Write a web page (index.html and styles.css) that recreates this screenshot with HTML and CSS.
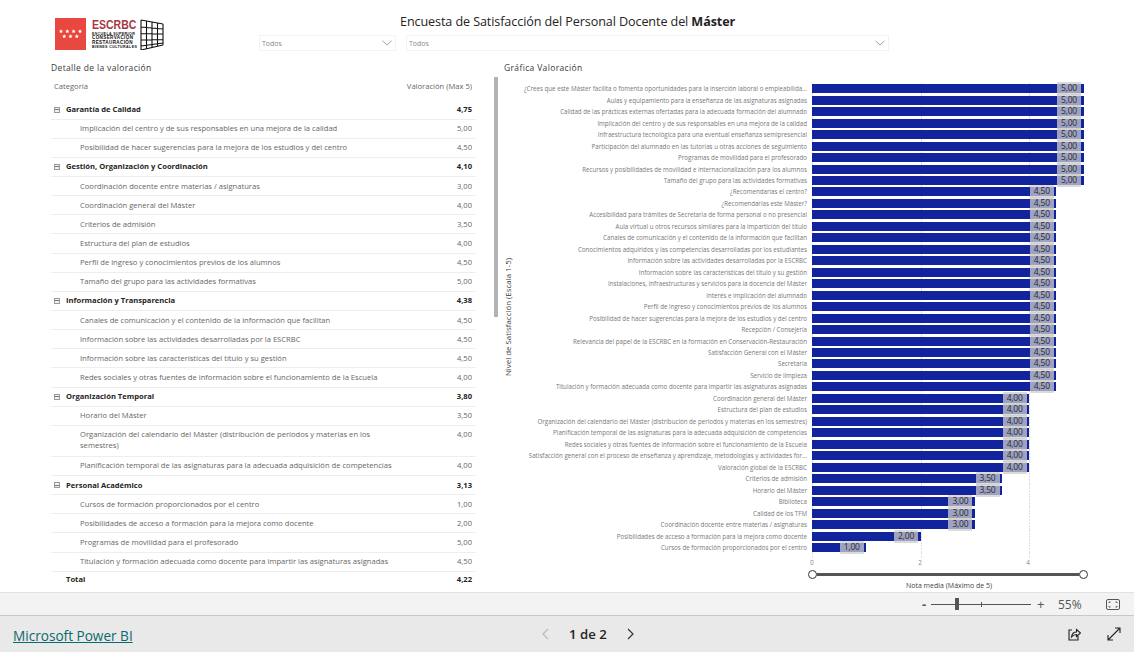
FILE: index.html
```html
<!DOCTYPE html>
<html lang="es">
<head>
<meta charset="utf-8">
<title>Encuesta de Satisfacción</title>
<link rel="stylesheet" href="styles.css">
</head>
<body>
<main class="report">
  <header class="head">
    <div class="logo">
      <svg class="flag" viewBox="0 0 31 32" width="31" height="32"><rect width="31" height="32" fill="#e8483f"/>
        <g fill="#fff"><path d="M6 11.200l.6 1.300 1.400.2-1 1 .25 1.400L6 14.400l-1.250.7.25-1.400-1-1 1.400-.2z"/><path d="M12.300 11.200l.6 1.300 1.400.2-1 1 .25 1.400-1.250-.7-1.250.7.25-1.400-1-1 1.400-.2z"/><path d="M18.600 11.200l.6 1.300 1.400.2-1 1 .25 1.400-1.250-.7-1.250.7.25-1.400-1-1 1.400-.2z"/><path d="M25 11.200l.6 1.300 1.400.2-1 1 .25 1.400-1.250-.7-1.250.7.25-1.400-1-1 1.400-.2z"/><path d="M9.200 16.200l.6 1.300 1.400.2-1 1 .25 1.400-1.250-.7-1.250.7.25-1.400-1-1 1.400-.2z"/><path d="M15.500 16.200l.6 1.300 1.400.2-1 1 .25 1.400-1.250-.7-1.250.7.25-1.400-1-1 1.400-.2z"/><path d="M21.800 16.200l.6 1.300 1.400.2-1 1 .25 1.400-1.250-.7-1.250.7.25-1.400-1-1 1.400-.2z"/></g></svg>
      <div class="logo-text">
        <span class="logo-name">ESCRBC</span>
        <span class="logo-line thin">ESCUELA SUPERIOR</span>
        <span class="logo-line">CONSERVACIÓN</span>
        <span class="logo-line">RESTAURACIÓN</span>
        <span class="logo-line thin">BIENES CULTURALES</span>
      </div>
      <svg class="grid-mark" viewBox="0 0 24 31" width="24" height="31" fill="none" stroke="#111" stroke-width="1.1"><path d="M1 1V31M6.500 2V29.500M12 3V28M17.500 4V27M23 5V26M1 1L23 5M1 8L23 10M1 14.500L23 15M1 21L23 20.500M1 27L23 24M1 31L23 26"/></svg>
    </div>
    <div class="head-main">
      <h1 class="title">Encuesta de Satisfacción del Personal Docente del <b>Máster</b></h1>
      <div class="filters">
        <div class="select select-a"><span>Todos</span><svg class="chev" viewBox="0 0 10 6" width="10" height="6" fill="none" stroke="#999" stroke-width=".9"><path d="M.500 .800L5 5L9.500 .800"/></svg></div>
        <div class="select select-b"><span>Todos</span><svg class="chev" viewBox="0 0 10 6" width="10" height="6" fill="none" stroke="#999" stroke-width=".9"><path d="M.500 .800L5 5L9.500 .800"/></svg></div>
      </div>
    </div>
  </header>

  <div class="panels">
    <section class="table-panel">
      <h2 class="panel-title">Detalle de la valoración</h2>
      <div class="table-wrap">
        <div class="table">
          <div class="thead"><span>Categoría</span><span>Valoración (Max 5)</span></div>
          <div class="row group"><span class="cell"><i class="minus"></i>Garantía de Calidad</span><span>4,75</span></div>
          <div class="row"><span class="cell">Implicación del centro y de sus responsables en una mejora de la calidad</span><span>5,00</span></div>
          <div class="row"><span class="cell">Posibilidad de hacer sugerencias para la mejora de los estudios y del centro</span><span>4,50</span></div>
          <div class="row group"><span class="cell"><i class="minus"></i>Gestión, Organización y Coordinación</span><span>4,10</span></div>
          <div class="row"><span class="cell">Coordinación docente entre materias / asignaturas</span><span>3,00</span></div>
          <div class="row"><span class="cell">Coordinación general del Máster</span><span>4,00</span></div>
          <div class="row"><span class="cell">Criterios de admisión</span><span>3,50</span></div>
          <div class="row"><span class="cell">Estructura del plan de estudios</span><span>4,00</span></div>
          <div class="row"><span class="cell">Perfil de ingreso y conocimientos previos de los alumnos</span><span>4,50</span></div>
          <div class="row"><span class="cell">Tamaño del grupo para las actividades formativas</span><span>5,00</span></div>
          <div class="row group"><span class="cell"><i class="minus"></i>Información y Transparencia</span><span>4,38</span></div>
          <div class="row"><span class="cell">Canales de comunicación y el contenido de la información que facilitan</span><span>4,50</span></div>
          <div class="row"><span class="cell">Información sobre las actividades desarrolladas por la ESCRBC</span><span>4,50</span></div>
          <div class="row"><span class="cell">Información sobre las características del título y su gestión</span><span>4,50</span></div>
          <div class="row"><span class="cell">Redes sociales y otras fuentes de información sobre el funcionamiento de la Escuela</span><span>4,00</span></div>
          <div class="row group"><span class="cell"><i class="minus"></i>Organización Temporal</span><span>3,80</span></div>
          <div class="row"><span class="cell">Horario del Máster</span><span>3,50</span></div>
          <div class="row tall"><span class="cell">Organización del calendario del Máster (distribución de periodos y materias en los semestres)</span><span>4,00</span></div>
          <div class="row"><span class="cell">Planificación temporal de las asignaturas para la adecuada adquisición de competencias</span><span>4,00</span></div>
          <div class="row group"><span class="cell"><i class="minus"></i>Personal Académico</span><span>3,13</span></div>
          <div class="row"><span class="cell">Cursos de formación proporcionados por el centro</span><span>1,00</span></div>
          <div class="row"><span class="cell">Posibilidades de acceso a formación para la mejora como docente</span><span>2,00</span></div>
          <div class="row"><span class="cell">Programas de movilidad para el profesorado</span><span>5,00</span></div>
          <div class="row"><span class="cell">Titulación y formación adecuada como docente para impartir las asignaturas asignadas</span><span>4,50</span></div>
          <div class="row total"><span class="cell">Total</span><span>4,22</span></div>
        </div>
        <div class="scrollbar"></div>
      </div>
    </section>

    <section class="chart-panel">
      <h2 class="panel-title">Gráfica Valoración</h2>
      <div class="chart">
        <div class="y-title"><span>Nivel de Satisfacción (Escala 1-5)</span></div>
        <div class="chart-main">
          <div class="bars">
            <div class="bar-row"><span class="bar-label">¿Crees que este Máster facilita o fomenta oportunidades para la inserción laboral o empleabilida...</span><div class="plot"><div class="bar" style="width:100%"><span class="val">5,00</span></div></div></div>
            <div class="bar-row"><span class="bar-label">Aulas y equipamiento para la enseñanza de las asignaturas asignadas</span><div class="plot"><div class="bar" style="width:100%"><span class="val">5,00</span></div></div></div>
            <div class="bar-row"><span class="bar-label">Calidad de las prácticas externas ofertadas para la adecuada formación del alumnado</span><div class="plot"><div class="bar" style="width:100%"><span class="val">5,00</span></div></div></div>
            <div class="bar-row"><span class="bar-label">Implicación del centro y de sus responsables en una mejora de la calidad</span><div class="plot"><div class="bar" style="width:100%"><span class="val">5,00</span></div></div></div>
            <div class="bar-row"><span class="bar-label">Infraestructura tecnológica para una eventual enseñanza semipresencial</span><div class="plot"><div class="bar" style="width:100%"><span class="val">5,00</span></div></div></div>
            <div class="bar-row"><span class="bar-label">Participación del alumnado en las tutorías u otras acciones de seguimiento</span><div class="plot"><div class="bar" style="width:100%"><span class="val">5,00</span></div></div></div>
            <div class="bar-row"><span class="bar-label">Programas de movilidad para el profesorado</span><div class="plot"><div class="bar" style="width:100%"><span class="val">5,00</span></div></div></div>
            <div class="bar-row"><span class="bar-label">Recursos y posibilidades de movilidad e internacionalización para los alumnos</span><div class="plot"><div class="bar" style="width:100%"><span class="val">5,00</span></div></div></div>
            <div class="bar-row"><span class="bar-label">Tamaño del grupo para las actividades formativas</span><div class="plot"><div class="bar" style="width:100%"><span class="val">5,00</span></div></div></div>
            <div class="bar-row"><span class="bar-label">¿Recomendarías el centro?</span><div class="plot"><div class="bar" style="width:90%"><span class="val">4,50</span></div></div></div>
            <div class="bar-row"><span class="bar-label">¿Recomendarías este Máster?</span><div class="plot"><div class="bar" style="width:90%"><span class="val">4,50</span></div></div></div>
            <div class="bar-row"><span class="bar-label">Accesibilidad para trámites de Secretaría de forma personal o no presencial</span><div class="plot"><div class="bar" style="width:90%"><span class="val">4,50</span></div></div></div>
            <div class="bar-row"><span class="bar-label">Aula virtual u otros recursos similares para la impartición del título</span><div class="plot"><div class="bar" style="width:90%"><span class="val">4,50</span></div></div></div>
            <div class="bar-row"><span class="bar-label">Canales de comunicación y el contenido de la información que facilitan</span><div class="plot"><div class="bar" style="width:90%"><span class="val">4,50</span></div></div></div>
            <div class="bar-row"><span class="bar-label">Conocimientos adquiridos y las competencias desarrolladas por los estudiantes</span><div class="plot"><div class="bar" style="width:90%"><span class="val">4,50</span></div></div></div>
            <div class="bar-row"><span class="bar-label">Información sobre las actividades desarrolladas por la ESCRBC</span><div class="plot"><div class="bar" style="width:90%"><span class="val">4,50</span></div></div></div>
            <div class="bar-row"><span class="bar-label">Información sobre las características del título y su gestión</span><div class="plot"><div class="bar" style="width:90%"><span class="val">4,50</span></div></div></div>
            <div class="bar-row"><span class="bar-label">Instalaciones, infraestructuras y servicios para la docencia del Máster</span><div class="plot"><div class="bar" style="width:90%"><span class="val">4,50</span></div></div></div>
            <div class="bar-row"><span class="bar-label">Interés e implicación del alumnado</span><div class="plot"><div class="bar" style="width:90%"><span class="val">4,50</span></div></div></div>
            <div class="bar-row"><span class="bar-label">Perfil de ingreso y conocimientos previos de los alumnos</span><div class="plot"><div class="bar" style="width:90%"><span class="val">4,50</span></div></div></div>
            <div class="bar-row"><span class="bar-label">Posibilidad de hacer sugerencias para la mejora de los estudios y del centro</span><div class="plot"><div class="bar" style="width:90%"><span class="val">4,50</span></div></div></div>
            <div class="bar-row"><span class="bar-label">Recepción / Consejería</span><div class="plot"><div class="bar" style="width:90%"><span class="val">4,50</span></div></div></div>
            <div class="bar-row"><span class="bar-label">Relevancia del papel de la ESCRBC en la formación en Conservación-Restauración</span><div class="plot"><div class="bar" style="width:90%"><span class="val">4,50</span></div></div></div>
            <div class="bar-row"><span class="bar-label">Satisfacción General con el Máster</span><div class="plot"><div class="bar" style="width:90%"><span class="val">4,50</span></div></div></div>
            <div class="bar-row"><span class="bar-label">Secretaría</span><div class="plot"><div class="bar" style="width:90%"><span class="val">4,50</span></div></div></div>
            <div class="bar-row"><span class="bar-label">Servicio de limpieza</span><div class="plot"><div class="bar" style="width:90%"><span class="val">4,50</span></div></div></div>
            <div class="bar-row"><span class="bar-label">Titulación y formación adecuada como docente para impartir las asignaturas asignadas</span><div class="plot"><div class="bar" style="width:90%"><span class="val">4,50</span></div></div></div>
            <div class="bar-row"><span class="bar-label">Coordinación general del Máster</span><div class="plot"><div class="bar" style="width:80%"><span class="val">4,00</span></div></div></div>
            <div class="bar-row"><span class="bar-label">Estructura del plan de estudios</span><div class="plot"><div class="bar" style="width:80%"><span class="val">4,00</span></div></div></div>
            <div class="bar-row"><span class="bar-label">Organización del calendario del Máster (distribución de periodos y materias en los semestres)</span><div class="plot"><div class="bar" style="width:80%"><span class="val">4,00</span></div></div></div>
            <div class="bar-row"><span class="bar-label">Planificación temporal de las asignaturas para la adecuada adquisición de competencias</span><div class="plot"><div class="bar" style="width:80%"><span class="val">4,00</span></div></div></div>
            <div class="bar-row"><span class="bar-label">Redes sociales y otras fuentes de información sobre el funcionamiento de la Escuela</span><div class="plot"><div class="bar" style="width:80%"><span class="val">4,00</span></div></div></div>
            <div class="bar-row"><span class="bar-label">Satisfacción general con el proceso de enseñanza y aprendizaje, metodologías y actividades for...</span><div class="plot"><div class="bar" style="width:80%"><span class="val">4,00</span></div></div></div>
            <div class="bar-row"><span class="bar-label">Valoración global de la ESCRBC</span><div class="plot"><div class="bar" style="width:80%"><span class="val">4,00</span></div></div></div>
            <div class="bar-row"><span class="bar-label">Criterios de admisión</span><div class="plot"><div class="bar" style="width:70%"><span class="val">3,50</span></div></div></div>
            <div class="bar-row"><span class="bar-label">Horario del Máster</span><div class="plot"><div class="bar" style="width:70%"><span class="val">3,50</span></div></div></div>
            <div class="bar-row"><span class="bar-label">Biblioteca</span><div class="plot"><div class="bar" style="width:60%"><span class="val">3,00</span></div></div></div>
            <div class="bar-row"><span class="bar-label">Calidad de los TFM</span><div class="plot"><div class="bar" style="width:60%"><span class="val">3,00</span></div></div></div>
            <div class="bar-row"><span class="bar-label">Coordinación docente entre materias / asignaturas</span><div class="plot"><div class="bar" style="width:60%"><span class="val">3,00</span></div></div></div>
            <div class="bar-row"><span class="bar-label">Posibilidades de acceso a formación para la mejora como docente</span><div class="plot"><div class="bar" style="width:40%"><span class="val">2,00</span></div></div></div>
            <div class="bar-row"><span class="bar-label">Cursos de formación proporcionados por el centro</span><div class="plot"><div class="bar" style="width:20%"><span class="val">1,00</span></div></div></div>
            <div class="bar-row end"><span class="bar-label"></span><div class="plot"></div></div>
          </div>
          <div class="x-axis"><span>0</span><span>2</span><span>4</span></div>
          <div class="slider"><i class="knob"></i><b class="track"></b><i class="knob"></i></div>
          <div class="x-title">Nota media (Máximo de 5)</div>
        </div>
      </div>
    </section>
  </div>
</main>

<div class="zoom-bar">
  <span class="z-minus">-</span>
  <div class="z-track"><i class="z-thumb"></i><i class="z-tick"></i></div>
  <span class="z-plus">+</span>
  <span class="z-pct">55%</span>
  <svg class="z-fit" viewBox="0 0 14 11" width="14" height="11" fill="none" stroke="#555"><rect x=".5" y=".5" width="13" height="10" rx="1.500"/><path d="M3 4V3H4.500M9.500 3H11V4M11 7V8H9.500M4.500 8H3V7"/></svg>
</div>

<footer class="foot">
  <a class="brand" href="#">Microsoft Power BI</a>
  <nav class="pager">
    <svg viewBox="0 0 7 12" width="7" height="12" fill="none" stroke="#bbb" stroke-width="1.2"><path d="M6 1L1 6L6 11"/></svg>
    <span class="page">1 de 2</span>
    <svg viewBox="0 0 7 12" width="7" height="12" fill="none" stroke="#333" stroke-width="1.2"><path d="M1 1L6 6L1 11"/></svg>
  </nav>
  <div class="foot-icons">
    <svg viewBox="0 0 14 14" width="14" height="14" fill="none" stroke="#222" stroke-width="1.100"><path d="M5 3H2V13H11V9"/><path d="M4.500 10C5 6.500 7 5 9.500 5V2.500L13.500 6L9.500 9.500V7.500C7.500 7.500 6 8.300 4.500 10Z"/></svg>
    <svg viewBox="0 0 14 14" width="14" height="14" fill="none" stroke="#222" stroke-width="1.100"><path d="M1 13L13 1M8 1H13V6M1 8V13H6"/></svg>
  </div>
</footer>
</body>
</html>
```

FILE: styles.css
```css
* { box-sizing: border-box; }
html, body { margin: 0; height: 100%; }
body {
  width: 1134px; height: 652px; overflow: hidden; background: #fff;
  font-family: "Open Sans", "Liberation Sans", sans-serif;
  display: flex; flex-direction: column;
}
.report { height: 592px; display: flex; flex-direction: column; }

.head { height: 60px; display: flex; }
.logo { width: 259px; padding: 18px 0 0 55px; display: flex; align-items: flex-start; }
.flag { flex: none; margin-right: 6px; }
.logo-text { width: 47px; display: flex; flex-direction: column; align-items: flex-start; margin-right: 1px; }
.logo-name { font: bold 12.500px/14px "Liberation Sans", sans-serif; color: #a5383f; transform: scaleX(.84); transform-origin: left; white-space: nowrap; }
.logo-line { font: bold 4.600px/4.400px "Liberation Sans", sans-serif; color: #111; letter-spacing: .35px; white-space: nowrap; }
.logo-line.thin { font-size: 3.600px; letter-spacing: .4px; }
.grid-mark { flex: none; margin-top: 1px; }

.head-main { flex: none; width: 630px; }
.title { margin: 13px 0 0 141px; font-size: 12.600px; line-height: 17px; font-weight: 400; letter-spacing: -.1px; color: #252423; white-space: nowrap; }
.title b { font-weight: 700; }
.filters { display: flex; gap: 10px; margin-top: 5px; }
.select { height: 16px; border: 1px solid #f3f3f3; display: flex; align-items: center; justify-content: space-between; padding: 0 3px 0 2px; font-size: 7px; color: #8a8a8a; }
.select-a { width: 137px; }
.select-b { width: 483px; }

.panels { display: flex; flex: 1; }
.panel-title { margin: 0; font-size: 8.500px; line-height: 12px; font-weight: 400; letter-spacing: .35px; color: #3b3a39; }

.table-panel { width: 453px; margin-left: 51px; display: flex; flex-direction: column; padding-top: 2px; }
.table-wrap { display: flex; align-items: flex-start; gap: 18px; }
.table { width: 425px; font-size: 7.600px; }
.thead { height: 26.500px; padding: 6px 4px 0 3px; display: flex; justify-content: space-between; color: #666; line-height: 12px; }
.row { min-height: 19.150px; display: flex; justify-content: space-between; align-items: center; padding: 0 4px 0 29px; color: #666; border-bottom: 1px solid #eee; line-height: 11px; }
.row.tall { min-height: 31px; align-items: flex-start; padding-top: 3px; padding-bottom: 3px; }
.row.tall .cell { width: 310px; }
.row.group { padding-left: 3px; color: #252423; font-weight: 700; }
.row.group .cell { display: flex; align-items: center; }
.row.total { min-height: 15px; padding-left: 15px; color: #252423; font-weight: 700; border: 0; }
.minus { width: 6px; height: 6px; margin-right: 6px; border: 1px solid #999; background: linear-gradient(#777, #777) center / 4px 1px no-repeat #f2f2f2; }
.scrollbar { flex: none; width: 4px; height: 240px; margin-top: 3px; background: #b3b3b3; }

.chart-panel { flex: 1; padding: 2px 0 0 0; display: flex; flex-direction: column; }
.chart { display: flex; margin-top: 9px; }
.y-title { width: 8px; margin-right: 8px; display: flex; justify-content: center; align-items: center; height: 468px; font-size: 7.900px; color: #444; }
.y-title span { writing-mode: vertical-rl; transform: rotate(180deg); white-space: nowrap; }
.chart-main { width: 564px; display: flex; flex-direction: column; }
.bars { display: flex; flex-direction: column; }
.bar-row { height: 11.475px; display: flex; align-items: center; flex: none; }
.bar-row.end { height: 5px; }
.bar-label { width: 292px; flex: none; padding-right: 5px; text-align: right; font-size: 6.200px; color: #777; white-space: nowrap; }
.plot {
  width: 271.500px; height: 100%; flex: none; display: flex; align-items: center;
  background-image: linear-gradient(#e0e0e0 60%, transparent 60%), linear-gradient(#e0e0e0 60%, transparent 60%), linear-gradient(#e0e0e0 60%, transparent 60%);
  background-size: 1px 3px; background-repeat: repeat-y; background-position: 0 0, 108.600px 0, 217.200px 0;
}
.bar { height: 9px; background: #12239e; display: flex; justify-content: flex-end; align-items: center; padding-right: 2.500px; }
.val { flex: none; width: 24px; height: 13px; text-align: center; font-size: 8.500px; line-height: 12px; letter-spacing: -.2px; color: #2b2b2b; background: rgba(205, 205, 205, .75); border-radius: 1px; }

.x-axis { margin-left: 290px; width: 220px; display: flex; justify-content: space-between; font-size: 6.500px; line-height: 10px; color: #888; }
.slider { margin: 2px 0 0 288px; width: 280px; display: flex; align-items: center; }
.knob { flex: none; width: 9px; height: 9px; border-radius: 50%; background: #fff; border: 1px solid #333; }
.track { flex: 1; height: 3px; background: #555; }
.x-title { margin: 2px 0 0 294px; width: 270px; text-align: center; font-size: 7px; line-height: 10px; color: #444; }

.zoom-bar { background: #f3f3f3; border-top: 1px solid #e2e2e2; border-bottom: 1px solid #c8c8c8; display: flex; align-items: center; padding-left: 922px; color: #555; box-sizing: content-box; height: 22px; }
.z-minus { width: 9px; font-size: 13px; font-weight: 700; }
.z-track { width: 100px; height: 1px; background: #555; display: flex; align-items: center; position: relative; }
.z-thumb { position: absolute; left: 24px; width: 4px; height: 12px; background: #555; }
.z-tick { position: absolute; left: 50px; width: 1px; height: 5px; background: #555; }
.z-plus { margin-left: 6px; width: 11px; font-size: 13px; line-height: 13px; }
.z-pct { margin-left: 10px; width: 48px; font-size: 12px; }
.z-fit { flex: none; }

.foot { flex: 1; background: #e9e9e9; display: flex; align-items: center; padding: 2px 13px 0; }
.brand { width: 529px; font-size: 13.600px; color: #0b6a6e; text-decoration: underline; }
.pager { display: flex; align-items: center; gap: 20px; margin-top: -2px; }
.page { font-size: 13.200px; font-weight: 600; color: #252423; }
.foot-icons { margin-left: auto; display: flex; gap: 26px; margin-top: -3px; }
```
